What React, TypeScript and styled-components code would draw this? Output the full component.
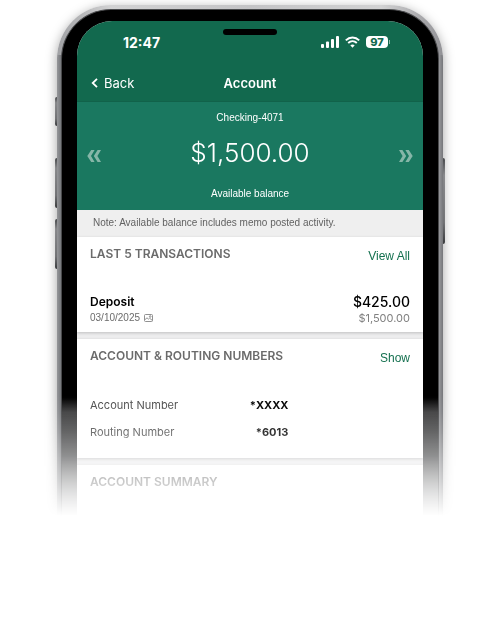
import React from "react";
import styled, { createGlobalStyle } from "styled-components";

const GlobalStyle = createGlobalStyle`
  *, *::before, *::after { box-sizing: border-box; }
  body {
    margin: 0;
    background: #fff;
    font-family: Inter, "Liberation Sans", sans-serif;
    color: #000;
  }
  h1, h2, p, dl, dt, dd, ul { margin: 0; padding: 0; font-weight: 400; }
`;

const compactFont = `"Liberation Sans", Inter, sans-serif`;

const Stage = styled.main`
  padding: 5px 57px 0;
  overflow: hidden;
  mask-image: linear-gradient(
    to bottom,
    #000 396px,
    rgba(0, 0, 0, 0.94) 411px,
    rgba(0, 0, 0, 0.8) 432px,
    rgba(0, 0, 0, 0.6) 455px,
    rgba(0, 0, 0, 0.37) 481px,
    transparent 516px
  );
`;

const Phone = styled.div`
  position: relative;
  padding: 4px 4px 0;
  border-radius: 54px 54px 0 0;
  background: linear-gradient(90deg, #a0a1a4 0, #d2d2d3 14%, #c4c4c6 50%, #d2d2d3 84%, #929296 100%) top / 100% 50px no-repeat,
    linear-gradient(90deg, #96979a 0, #76787c 4px, #96979a calc(100% - 4px), #76777b 100%);
  box-shadow: 0 3px 12px rgba(0, 0, 0, 0.36);
`;

const SideKey = styled.span<{ $side: "left" | "right"; $top: number; $length: number }>`
  position: absolute;
  z-index: -1;
  ${(p) => p.$side}: -2px;
  top: ${(p) => p.$top}px;
  width: 4px;
  height: ${(p) => p.$length}px;
  border-radius: 2px;
  background: linear-gradient(#55575a, #a2a3a6 20%, #88898c 75%, #444649);
`;

const Bezel = styled.div`
  padding: 11px 15px 0;
  border: 1px solid #4a4b4d;
  border-bottom: 0;
  border-radius: 50px 50px 0 0;
  background: linear-gradient(#000 388px, #3b3b3c 402px, #424344 446px, #757677 472px, #999a9b 500px);
`;

const Screen = styled.div`
  overflow: hidden;
  border-radius: 35px 35px 0 0;
  background: #ededee;
`;

const Header = styled.header`
  background: #12694e;
  color: #fff;
  border-bottom: 1px solid #11624a;
`;

const StatusBar = styled.div`
  display: grid;
  grid-template-columns: 1fr 54px 1fr;
  height: 44px;
  padding: 8px 33px 0;
`;

const Clock = styled.time`
  padding-left: 13px;
  font-size: 14px;
  line-height: 28px;
  font-weight: 700;
`;

const Speaker = styled.span`
  height: 6px;
  border-radius: 3px;
  background: #000;
`;

const StatusIcons = styled.div`
  display: flex;
  justify-content: flex-end;
  align-items: center;
  gap: 6px;
  height: 26px;
`;

const Battery = styled.span`
  display: flex;
  align-items: center;
  gap: 1px;

  &::after {
    content: "";
    width: 1px;
    height: 4px;
    background: #8fb7a8;
  }
`;

const Charge = styled.span`
  width: 22px;
  border-radius: 4px;
  background: #fff;
  color: #12694e;
  font-size: 11px;
  line-height: 12px;
  font-weight: 800;
  text-align: center;
`;

const NavBar = styled.nav`
  display: grid;
  grid-template-columns: 1fr auto 1fr;
  align-items: center;
  height: 36px;
  padding: 0 14px;
`;

const PlainButton = styled.button`
  display: inline-flex;
  align-items: center;
  padding: 0;
  border: 0;
  background: none;
  color: inherit;
  font: inherit;
  cursor: pointer;
`;

const BackButton = styled(PlainButton)`
  gap: 6px;
  font-size: 13px;
  line-height: 20px;
`;

const PageTitle = styled.h1`
  font-size: 13px;
  line-height: 20px;
  font-weight: 600;
`;

const Balance = styled.section`
  display: grid;
  grid-template-columns: 14px 1fr 14px;
  align-items: center;
  height: 108px;
  padding: 0 10px;
  background: #1a7860;
  color: #fff;
  text-align: center;
`;

const Pager = styled(PlainButton)`
  color: #86b6a8;
`;

const BalanceText = styled.p`
  font-family: ${compactFont};
  font-size: 10px;
  line-height: 16px;
`;

const BalanceAmount = styled.p`
  padding: 8px 0 15px;
  font-size: 26px;
  line-height: 37px;
  font-weight: 300;
`;

const Note = styled.p`
  height: 27px;
  padding: 0 16px;
  background: #efefef;
  color: #626262;
  font-family: ${compactFont};
  font-size: 10px;
  line-height: 26px;
`;

const Card = styled.section<{ $height: number }>`
  min-height: ${(p) => p.$height}px;
  margin-bottom: 7px;
  padding: 7px 13px 0;
  background: #fff;
  box-shadow: 0 1px 3px rgba(0, 0, 0, 0.2);
`;

const CardHead = styled.div`
  display: flex;
  justify-content: space-between;
`;

const CardTitle = styled.h2`
  color: #6b6b6b;
  font-size: 12px;
  line-height: 20px;
  font-weight: 600;
`;

const CardLink = styled.a`
  padding-top: 2px;
  color: #14704f;
  font-family: ${compactFont};
  font-size: 12px;
  line-height: 20px;
  text-decoration: none;
`;

const Transaction = styled.div`
  display: flex;
  justify-content: space-between;
  padding-top: 27px;
`;

const Stack = styled.div<{ $end?: boolean }>`
  display: flex;
  flex-direction: column;
  align-items: ${(p) => (p.$end ? "flex-end" : "flex-start")};
`;

const Strong = styled.span<{ $amount?: boolean }>`
  font-size: ${(p) => (p.$amount ? 14 : 12)}px;
  line-height: 17px;
  font-weight: ${(p) => (p.$amount ? 500 : 600)};
`;

const Muted = styled.span<{ $amount?: boolean }>`
  display: flex;
  align-items: center;
  gap: 4px;
  color: ${(p) => (p.$amount ? "#808080" : "#6c6c6c")};
  font-family: ${(p) => (p.$amount ? "inherit" : compactFont)};
  font-size: ${(p) => (p.$amount ? 11 : 10)}px;
  line-height: 16px;
`;

const Details = styled.dl`
  width: 62%;
  padding-top: 24px;
`;

const Detail = styled.div`
  display: flex;
  justify-content: space-between;
  color: #4e4e4e;
  font-size: 11px;
  line-height: 27px;

  dd {
    color: #000;
    font-weight: 700;
  }
`;

const Signal = () => (
  <svg width="18" height="12" viewBox="0 0 18 12" fill="#fff" aria-hidden="true">
    <rect x="0" y="8" width="3" height="4" rx="1" />
    <rect x="5" y="5.5" width="3" height="6.5" rx="1" />
    <rect x="10" y="3" width="3" height="9" rx="1" />
    <rect x="15" y="0" width="3" height="12" rx="1" />
  </svg>
);

const Wifi = () => (
  <svg width="15" height="12" viewBox="0 0 15 12" fill="none" stroke="#fff" strokeWidth="1.9" aria-hidden="true">
    <path d="M.8 4.4C4.6.6 10.4.6 14.2 4.4" />
    <path d="M3.2 7C5.7 4.6 9.3 4.6 11.8 7" />
    <path d="M7.5 11.7 5.3 9.3c1.3-1.2 3.1-1.2 4.4 0Z" fill="#fff" stroke="none" />
  </svg>
);

const BackArrow = () => (
  <svg width="7" height="10" viewBox="0 0 7 10" fill="none" stroke="#fff" strokeWidth="1.8" aria-hidden="true">
    <path d="M6 .8 1.7 5 6 9.2" />
  </svg>
);

const DoubleChevron = ({ forward }: { forward?: boolean }) => (
  <svg width="14" height="12" viewBox="0 0 14 12" fill="currentColor" aria-hidden="true">
    {forward ? (
      <path d="M0 0h3.4l3.8 6-3.8 6H0l3.6-6ZM6.4 0h3.4l3.9 6-3.9 6H6.4L10 6Z" />
    ) : (
      <path d="M7.6 0H4.2L.3 6l3.9 6h3.4L4 6ZM14 0h-3.4L6.8 6l3.8 6H14l-3.6-6Z" />
    )}
  </svg>
);

const CheckImage = () => (
  <svg width="9" height="8" viewBox="0 0 9 8" fill="none" stroke="#858585" strokeWidth=".9" aria-hidden="true">
    <rect x=".5" y=".5" width="8" height="7" rx="1" />
    <path d="m.8 5.8 2.2-2 1.4 1.3 1.2-.9 2.8 2.3" />
    <circle cx="6.2" cy="2.5" r=".8" />
  </svg>
);

const accountDetails = [
  { label: "Account Number", value: "*XXXX" },
  { label: "Routing Number", value: "*6013" },
];

export default function App() {
  return (
    <>
      <GlobalStyle />
      <Stage>
        <Phone>
          <SideKey $side="left" $top={92} $length={29} />
          <SideKey $side="left" $top={153} $length={50} />
          <SideKey $side="left" $top={214} $length={50} />
          <SideKey $side="right" $top={153} $length={86} />
          <Bezel>
            <Screen>
              <Header>
                <StatusBar>
                  <Clock>12:47</Clock>
                  <Speaker />
                  <StatusIcons>
                    <Signal />
                    <Wifi />
                    <Battery>
                      <Charge>97</Charge>
                    </Battery>
                  </StatusIcons>
                </StatusBar>
                <NavBar>
                  <BackButton type="button">
                    <BackArrow />
                    Back
                  </BackButton>
                  <PageTitle>Account</PageTitle>
                </NavBar>
              </Header>

              <Balance>
                <Pager type="button" aria-label="Previous account">
                  <DoubleChevron />
                </Pager>
                <div>
                  <BalanceText>Checking-4071</BalanceText>
                  <BalanceAmount>$1,500.00</BalanceAmount>
                  <BalanceText>Available balance</BalanceText>
                </div>
                <Pager type="button" aria-label="Next account">
                  <DoubleChevron forward />
                </Pager>
              </Balance>

              <Note>Note: Available balance includes memo posted activity.</Note>

              <Card $height={95}>
                <CardHead>
                  <CardTitle>LAST 5 TRANSACTIONS</CardTitle>
                  <CardLink href="#transactions">View All</CardLink>
                </CardHead>
                <Transaction>
                  <Stack>
                    <Strong>Deposit</Strong>
                    <Muted>
                      03/10/2025 <CheckImage />
                    </Muted>
                  </Stack>
                  <Stack $end>
                    <Strong $amount>$425.00</Strong>
                    <Muted $amount>$1,500.00</Muted>
                  </Stack>
                </Transaction>
              </Card>

              <Card $height={119}>
                <CardHead>
                  <CardTitle>ACCOUNT &amp; ROUTING NUMBERS</CardTitle>
                  <CardLink href="#numbers">Show</CardLink>
                </CardHead>
                <Details>
                  {accountDetails.map((d) => (
                    <Detail key={d.label}>
                      <dt>{d.label}</dt>
                      <dd>{d.value}</dd>
                    </Detail>
                  ))}
                </Details>
              </Card>

              <Card $height={60}>
                <CardTitle>ACCOUNT SUMMARY</CardTitle>
              </Card>
            </Screen>
          </Bezel>
        </Phone>
      </Stage>
    </>
  );
}
